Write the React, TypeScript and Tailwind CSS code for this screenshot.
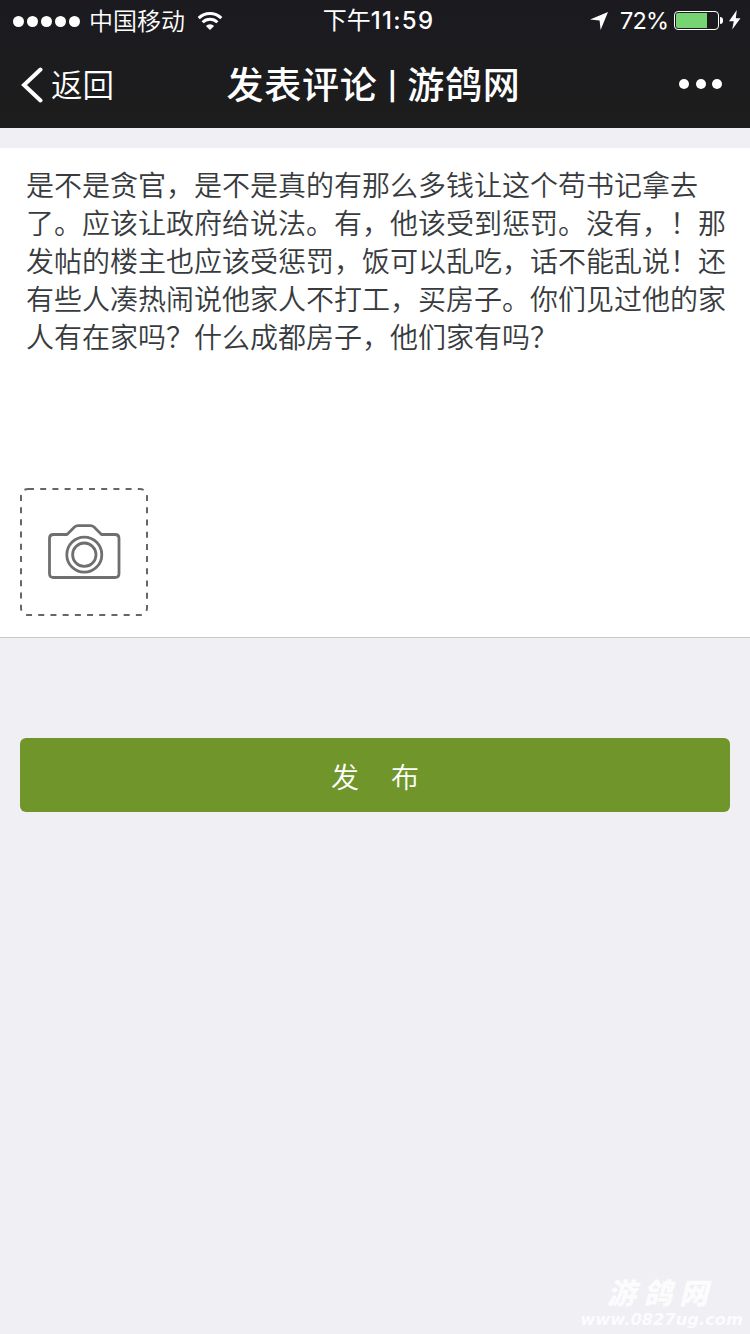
import React from 'react';

const StatusBar: React.FC = () => {
  return (
    <div className="relative flex h-10 items-center justify-center text-[24px] leading-10">
      <div className="absolute left-[13px] top-0 flex h-10 items-center">
        <div className="flex gap-[3px] pt-[2px]">
          {[0, 1, 2, 3, 4].map((dot) => (
            <span key={dot} className="h-[11px] w-[11px] rounded-full bg-white" />
          ))}
        </div>
        <span className="ml-[9px] pt-[3px] font-[350]">中国移动</span>
        <svg className="ml-[12px] mt-px h-[20px] w-[26px]" viewBox="0 0 26 20" fill="none" stroke="#fff">
          <path d="M1.700 7.100a16 16 0 0 1 22.600 0" strokeWidth="3" />
          <path d="M5.600 11.300a10.600 10.600 0 0 1 14.800 0" strokeWidth="3" />
          <path d="M13 19l-4.100-4.100a5.800 5.800 0 0 1 8.200 0z" fill="#fff" stroke="none" />
        </svg>
      </div>

      <div className="ml-[7px] flex pt-[2px]">
        <span>下午</span>
        <span className="font-medium tracking-[1.3px]">11:59</span>
      </div>

      <div className="absolute right-[9px] top-0 flex h-10 items-center">
        <svg className="mt-px h-[18px] w-[18px]" viewBox="0 0 18 18" fill="#fff">
          <path d="M18 0L10.600 18L9.600 8.500L0 7.600z" />
        </svg>
        <span className="ml-[12px] w-[54px] whitespace-nowrap pt-[2px] text-[23.5px] tracking-[-0.8px]">72%</span>
        <div className="mt-px flex h-[19px] w-[45px] rounded-[4px] border border-white p-[1px]">
          <div className="w-[31px] rounded-l-[2px] bg-[#76d572]" />
        </div>
        <div className="ml-[1px] mt-px h-[7px] w-[3px] rounded-r-full bg-white" />
        <svg className="ml-[6px] h-[20px] w-[12px]" viewBox="0 0 12 20" fill="#fff">
          <path d="M7.800 0L0 11.200h4.800L3.200 19.500L11.500 8.200H6.800z" />
        </svg>
      </div>
    </div>
  );
};

const NavBar: React.FC = () => {
  return (
    <div className="relative flex h-[88px] items-center justify-center">
      <button className="absolute left-[21px] top-0 flex h-[88px] items-center">
        <svg className="mt-px h-[36px] w-[22px]" viewBox="0 0 22 36" fill="none" stroke="#fff" strokeWidth="4">
          <path d="M19.500 2.500L3 18l16.500 15.500" strokeLinecap="round" />
        </svg>
        <span className="ml-[8px] pt-[3px] text-[31.5px] font-[350]">返回</span>
      </button>
      <h1 className="mr-[3px] flex items-center pt-[3px] text-[37px] font-medium tracking-[0.7px]">
        <span>发表评论</span>
        <span className="w-[30px] pt-[4px] text-center text-[27px] font-semibold tracking-normal">|</span>
        <span>游鸽网</span>
      </h1>
      <div className="absolute right-[28px] top-0 flex h-[88px] items-center gap-[6.500px]">
        <span className="h-[10px] w-[10px] rounded-full bg-white" />
        <span className="h-[10px] w-[10px] rounded-full bg-white" />
        <span className="h-[10px] w-[10px] rounded-full bg-white" />
      </div>
    </div>
  );
};

const CameraIcon: React.FC = () => {
  return (
    <svg className="h-[56px] w-[74px]" viewBox="0 0 74 56" fill="none" stroke="#6f6f6f" strokeWidth="2.800">
      <path
        d="M6.500 10.500H20l7.500-7.500q1.500-1.400 3.500-1.400h12.500q2 0 3.500 1.400l7.500 7.500H68q4 0 4 4V49.500q0 4-4 4H6.500q-4 0-4-4v-35q0-4 4-4z"
        strokeLinejoin="round"
      />
      <circle cx="37.300" cy="30.700" r="17.500" />
      <circle cx="37.300" cy="30.700" r="11.700" />
    </svg>
  );
};

const App: React.FC = () => {
  return (
    <div
      lang="zh-CN"
      className="flex h-[1334px] w-[750px] flex-col overflow-hidden bg-[#efeff4] font-[Inter,'Noto_Sans_CJK_SC',sans-serif]"
    >
      <header className="bg-linear-to-b from-[#1b1a1f] to-[#1d1d1d] text-white">
        <StatusBar />
        <NavBar />
      </header>

      <section className="mt-5 flex h-[490px] flex-col border-b border-[#c9c9cc] bg-white">
        <p className="h-[340px] pl-[26px] pr-[20px] pt-[17px] font-['Noto_Sans_CJK_SC',sans-serif] text-[28px] font-[350] leading-[38px] text-[#383b3e] [text-spacing-trim:space-all]">
          是不是贪官，是不是真的有那么多钱让这个苟书记拿去了。应该让政府给说法。有，他该受到惩罚。没有，！那发帖的楼主也应该受惩罚，饭可以乱吃，话不能乱说！还有些人凑热闹说他家人不打工，买房子。你们见过他的家人有在家吗？什么成都房子，他们家有吗？
        </p>
        <button className="relative ml-5 flex h-32 w-32 items-center justify-center">
          <svg className="absolute inset-0 h-32 w-32" viewBox="0 0 128 128" fill="none" stroke="#666" strokeWidth="2">
            <rect x="1" y="1" width="126" height="126" rx="7" strokeDasharray="6 6.200" />
          </svg>
          <CameraIcon />
        </button>
      </section>

      <button className="mx-5 mt-[100px] h-[74px] rounded-[6px] bg-[#70962b] pt-[5px] text-[28px] font-[350] text-white">
        <span className="mr-[32px]">发</span>
        <span>布</span>
      </button>

      <footer className="mt-auto flex flex-col items-end pb-[5px] pr-[7px] font-bold italic text-[#fcfcfd]">
        <span className="mr-[28px] text-[29px] font-black leading-[34px] tracking-[7px]">游鸽网</span>
        <span className="font-['DejaVu_Sans',sans-serif] text-[16.300px] leading-[18px]">www.0827ug.com</span>
      </footer>
    </div>
  );
};

export default App;
